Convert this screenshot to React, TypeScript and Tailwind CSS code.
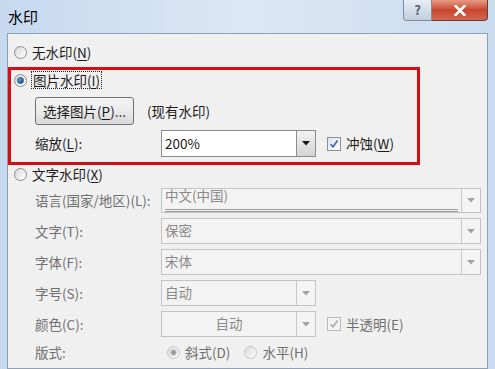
import React from "react";

function U({ children }: { children: React.ReactNode }) {
  return <span className="underline underline-offset-2">{children}</span>;
}

function Radio({ checked = false, dim = false }: { checked?: boolean; dim?: boolean }) {
  return (
    <span
      className={
        "flex shrink-0 items-center justify-center w-[13px] h-[13px] rounded-full border bg-gradient-to-br from-[#d9d9d9] to-[#ffffff] " +
        (dim ? "border-[#c6c6c6]" : "border-[#8b8b8b]")
      }
    >
      {checked && (
        <span
          className={
            "w-[7px] h-[7px] rounded-full " +
            (dim
              ? "bg-[#9d9d9d] border border-[#d8d8d8]"
              : "bg-gradient-to-br from-[#6fb3e8] to-[#0d4f8e] border border-[#1f4f7a]")
          }
        />
      )}
    </span>
  );
}

function Check({ dim = false }: { dim?: boolean }) {
  return (
    <span
      className={
        "flex items-center justify-center w-[14px] h-[14px] border " +
        (dim ? "border-[#b9b9b9] bg-[#f4f4f4]" : "border-[#8e8f9b] bg-gradient-to-br from-[#dfe3ea] to-white")
      }
    >
      <svg width="10" height="10" viewBox="0 0 10 10">
        <path
          d="M1.5 5.2 L4 7.8 L8.6 1.6"
          fill="none"
          stroke={dim ? "#a8a8a8" : "#3a5fb8"}
          strokeWidth="1.6"
        />
      </svg>
    </span>
  );
}

function Arrow({ dim = false }: { dim?: boolean }) {
  return (
    <svg width="8" height="5" viewBox="0 0 8 5">
      <path d="M0 0 H8 L4 4.5 Z" fill={dim ? "#a3a3a3" : "#1a1a1a"} />
    </svg>
  );
}

function Combo({
  value,
  wide = false,
  dim = false,
  h = "h-[26px]",
  center = false,
  line = false,
}: {
  value: string;
  wide?: boolean;
  dim?: boolean;
  h?: string;
  center?: boolean;
  line?: boolean;
}) {
  return (
    <div
      className={
        "flex shrink-0 border " +
        h +
        " " +
        (wide ? "w-[320px] " : "w-[155px] ") +
        (dim ? "border-[#c3c3c3] bg-[#f3f3f3] text-[#8a8a8a]" : "border-[#8c8c8c] bg-white text-[#1a1a1a]")
      }
    >
      <div className={"flex-1 flex flex-col justify-center px-[3px] " + (center ? "items-center" : "")}>
        <span className="leading-none">{value}</span>
        {line && <div className="mt-[6px] h-[4px] w-full border-y border-[#9c9c9c]" />}
      </div>
      <div
        className={
          "w-[19px] flex items-center justify-center border-l " +
          (dim
            ? "border-[#c8c8c8] bg-[#f4f4f4]"
            : "border-[#8c8c8c] bg-gradient-to-b from-[#f2f2f2] to-[#d4d4d4]")
        }
      >
        <Arrow dim={dim} />
      </div>
    </div>
  );
}

function Row({ label, children, mt = "mt-[5px]" }: { label: string; children: React.ReactNode; mt?: string }) {
  return (
    <div className={"flex shrink-0 items-center pl-[27px] " + mt}>
      <span className="w-[126px] text-[#6f6f6f]">{label}</span>
      {children}
    </div>
  );
}

export default function App() {
  return (
    <div className="w-[495px] h-[369px] overflow-hidden flex flex-col bg-gradient-to-r from-[#c6d9ef] via-[#dbe7f5] to-[#cbdcef] font-['Noto_Sans_CJK_SC',sans-serif] text-[13.5px] text-[#1b1b1b]">
      {/* title bar */}
      <div className="h-[33px] shrink-0 flex justify-between items-start">
        <span className="ml-[8px] mt-[9px] text-[15px] leading-none text-black">水印</span>
        <div className="flex mr-[7px]">
          <div className="w-[29px] h-[21px] flex items-center justify-center rounded-bl-[4px] border border-t-0 border-[#7d8ca0] bg-gradient-to-b from-[#e8eef5] to-[#c2cedc] text-[13px] font-bold text-[#56626f]">
            ?
          </div>
          <div className="w-[56px] h-[21px] flex items-center justify-center rounded-br-[4px] border border-t-0 border-l-0 border-[#6b3a3a] bg-gradient-to-b from-[#e49a86] via-[#c9462f] to-[#d2664e]">
            <svg width="12" height="11" viewBox="0 0 12 11">
              <path d="M1.5 1 L10.5 10 M10.5 1 L1.5 10" stroke="white" strokeWidth="2.6" strokeLinecap="square" />
            </svg>
          </div>
        </div>
      </div>

      {/* client area */}
      <div className="flex-1 min-h-0 overflow-hidden ml-[7px] mr-[7px] bg-[#f0f0f0] border border-[#8ea0b6] flex flex-col">
        <div className="mt-[7px] shrink-0 h-[22px] flex items-center pl-[6px] gap-[5px]">
          <Radio />
          <span>
            无水印(<U>N</U>)
          </span>
        </div>

        {/* picture watermark box */}
        <div className="mt-[4px] shrink-0 w-[412px] border-[3px] border-[#d20f12] flex flex-col">
          <div className="h-[20px] flex items-center pl-[3px] gap-[4px]">
            <Radio checked />
            <span className="border border-dotted border-[#222] px-[1px] leading-[16px]">
              图片水印(<U>I</U>)
            </span>
          </div>
          <div className="mt-[7px] flex items-center pl-[24px]">
            <div className="w-[99px] h-[28px] flex items-center justify-center rounded-[3px] border border-[#707070] bg-gradient-to-b from-[#f4f4f4] via-[#ebebeb] to-[#d8d8d8]">
              选择图片(<U>P</U>)...
            </div>
            <span className="ml-[13px]">(现有水印)</span>
          </div>
          <div className="mt-[5px] mb-[5px] flex items-center pl-[24px]">
            <span className="w-[126px]">
              缩放(<U>L</U>):
            </span>
            <Combo value="200%" h="h-[27px]" />
            <div className="ml-[11px] flex items-center gap-[5px]">
              <Check />
              <span>
                冲蚀(<U>W</U>)
              </span>
            </div>
          </div>
        </div>

        <div className="h-[18px] shrink-0 flex items-center pl-[6px] gap-[5px]">
          <Radio />
          <span>
            文字水印(<U>X</U>)
          </span>
        </div>

        <Row label="语言(国家/地区)(L):" mt="mt-[5px]">
          <Combo value="中文(中国)" wide dim h="h-[25px]" line />
        </Row>
        <Row label="文字(T):">
          <Combo value="保密" wide dim />
        </Row>
        <Row label="字体(F):">
          <Combo value="宋体" wide dim />
        </Row>
        <Row label="字号(S):">
          <Combo value="自动" dim />
        </Row>
        <Row label="颜色(C):">
          <Combo value="自动" dim center />
          <div className="ml-[11px] flex items-center gap-[5px] text-[#6f6f6f]">
            <Check dim />
            <span>半透明(E)</span>
          </div>
        </Row>
        <div className="mt-[5px] shrink-0 h-[20px] flex items-center pl-[27px] text-[#6f6f6f]">
          <span className="w-[126px]">版式:</span>
          <div className="flex items-center gap-[5px] ml-[6px]">
            <Radio checked dim />
            <span>斜式(D)</span>
          </div>
          <div className="flex items-center gap-[5px] ml-[14px]">
            <Radio dim />
            <span>水平(H)</span>
          </div>
        </div>
        <div className="mt-[9px] shrink-0 ml-[312px] h-[3px] bg-[#c5daf0]" />
      </div>
    </div>
  );
}
